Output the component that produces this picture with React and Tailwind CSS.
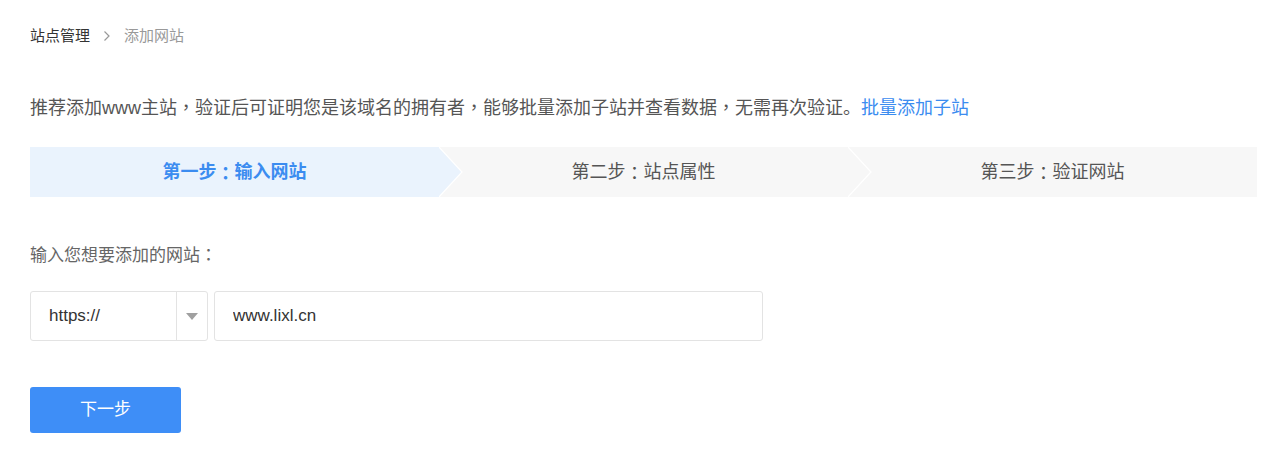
import { useState } from "react";

// 全角标点居中显示，与参考图一致
const P = ({ children }) => (
  <span style={{ fontFamily: '"Noto Sans CJK TC", sans-serif', lineHeight: 1 }}>{children}</span>
);

const steps = [
  ["第一步", "输入网站"],
  ["第二步", "站点属性"],
  ["第三步", "验证网站"],
];

export default function App() {
  const [site, setSite] = useState("www.lixl.cn");

  return (
    <div
      className="min-h-screen bg-white px-[30px] pt-[26px]"
      style={{ fontFamily: '"Liberation Sans", "Noto Sans CJK SC", sans-serif' }}
    >
      {/* 面包屑 */}
      <div className="flex items-center text-[15px] leading-5">
        <span className="text-[#333]">站点管理</span>
        <svg className="mx-[13px]" width="8" height="12" viewBox="0 0 8 12">
          <path d="M1.5 1.5 L6 6 L1.5 10.5" fill="none" stroke="#999" strokeWidth="1.2" />
        </svg>
        <span className="text-[#999]">添加网站</span>
      </div>

      <p className="mt-[50px] h-6 text-[18px] leading-6 text-[#555]">
        推荐添加www主站<P>，</P>验证后可证明您是该域名的拥有者<P>，</P>能够批量添加子站并查看数据<P>，</P>无需再次验证。
        <a className="text-[#3b8cf0] cursor-pointer">批量添加子站</a>
      </p>

      {/* 步骤条 */}
      <div className="mt-[27px] flex h-[50px] w-[1227px]">
        {steps.map(([a, b], i) => (
          <div
            key={a}
            className={`relative flex flex-1 items-center justify-center text-[18px] ${
              i === 0 ? "bg-[#eaf3fd] font-bold text-[#3b8cf0]" : "bg-[#f7f7f7] text-[#555]"
            }`}
          >
            {a}
            <P>：</P>
            {b}
            {i < 2 && (
              <svg
                className="absolute left-full top-0 z-10"
                width="24"
                height="50"
                viewBox="0 0 24 50"
              >
                <polygon points="0,0 23,25 0,50" fill={i === 0 ? "#eaf3fd" : "#f7f7f7"} />
                <polyline points="0,0 23,25 0,50" fill="none" stroke="#fff" strokeWidth="1.2" />
              </svg>
            )}
          </div>
        ))}
      </div>

      <div className="mt-[47px] h-6 text-[17px] leading-6 text-[#666]">
        输入您想要添加的网站<P>：</P>
      </div>

      <div className="mt-[23px] flex gap-[6px]">
        <div className="flex h-[50px] w-[178px] items-center rounded-[3px] border border-[#e3e3e3]">
          <span className="flex-1 pl-[18px] text-[17px] text-[#333]">https://</span>
          <div className="flex h-full w-[31px] items-center justify-center border-l border-[#e3e3e3]">
            <svg width="12" height="7" viewBox="0 0 12 7">
              <polygon points="0,0 12,0 6,7" fill="#a0a0a0" />
            </svg>
          </div>
        </div>
        <input
          value={site}
          onChange={(e) => setSite(e.target.value)}
          className="h-[50px] w-[549px] rounded-[3px] border border-[#e3e3e3] px-[18px] text-[17px] text-[#333] outline-none"
        />
      </div>

      <button className="mt-[46px] h-[46px] w-[151px] rounded-[3px] bg-[#3e8ef7] text-[17px] text-white">
        下一步
      </button>
    </div>
  );
}
